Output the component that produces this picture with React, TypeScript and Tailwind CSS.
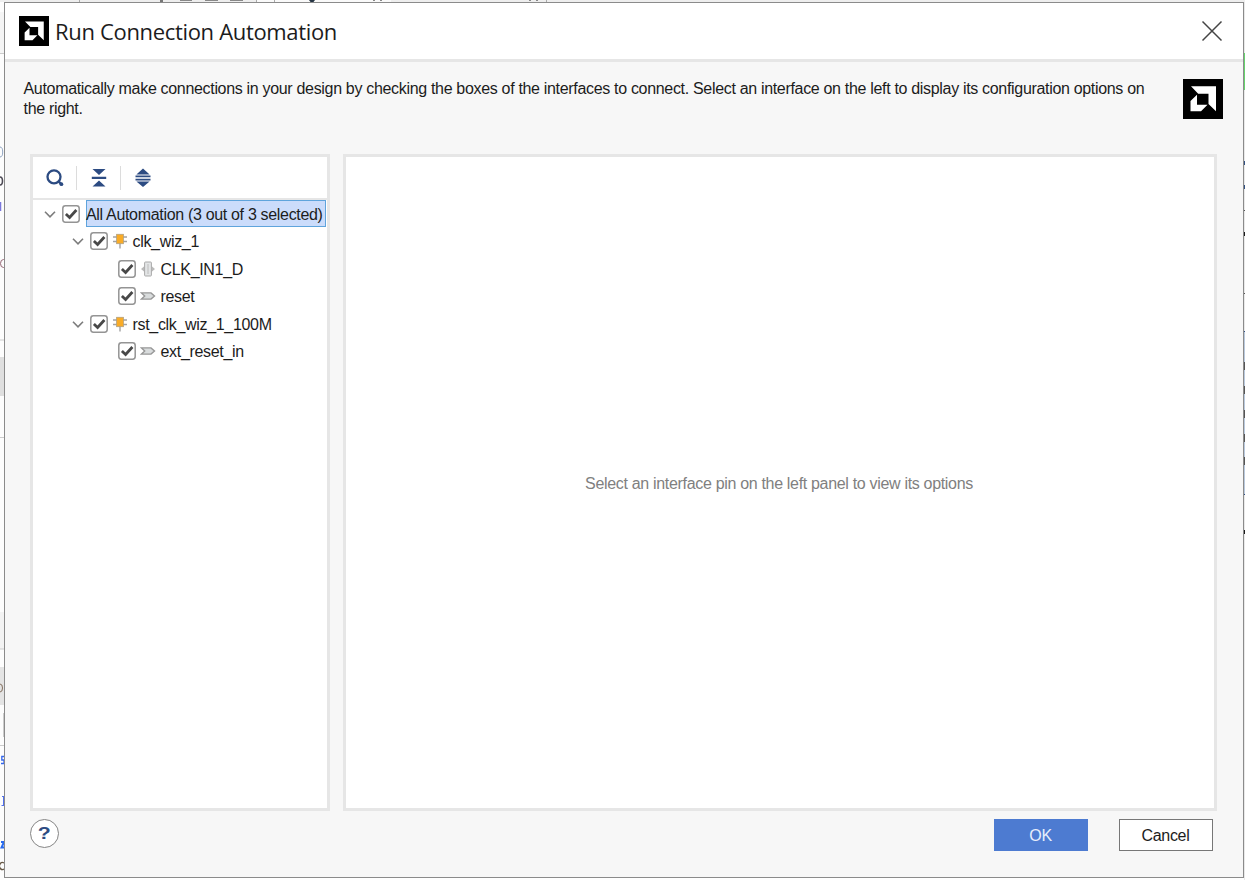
import React from "react";

type IconName = "chip" | "bus" | "port";

type Row = {
  label: string;
  depth: 0 | 1 | 2;
  icon?: IconName;
};

const rows: Row[] = [
  { label: "All Automation (3 out of 3 selected)", depth: 0 },
  { label: "clk_wiz_1", depth: 1, icon: "chip" },
  { label: "CLK_IN1_D", depth: 2, icon: "bus" },
  { label: "reset", depth: 2, icon: "port" },
  { label: "rst_clk_wiz_1_100M", depth: 1, icon: "chip" },
  { label: "ext_reset_in", depth: 2, icon: "port" },
];

const indents = ["pl-2.5", "pl-[37.5px]", "pl-[83.5px]"];

function BrandMark({ className }: { className: string }) {
  return (
    <svg viewBox="0 0 40 40" className={className} aria-hidden="true">
      <rect width="40" height="40" fill="#000" />
      <path d="M8 7.300H33V32.300L25.500 25V14.700H15.200Z" fill="#fff" />
      <path d="M14 15.700V25.800H24.500L18 32.300H7.500V22Z" fill="#fff" />
    </svg>
  );
}

function Chevron() {
  return (
    <svg viewBox="0 0 14 14" className="h-3.5 w-3.5 shrink-0" fill="none" stroke="#7c7c7c" strokeWidth="1.600">
      <path d="M2 4.800L7 9.800L12 4.800" />
    </svg>
  );
}

function Checkbox() {
  return (
    <svg viewBox="0 0 20 20" className="h-5 w-5 shrink-0">
      <rect x="1.800" y="1.800" width="16.400" height="16.400" rx="2.600" fill="#fff" stroke="#949494" strokeWidth="1.500" />
      <path d="M4.900 10L8.600 13.500L15.400 6" fill="none" stroke="#484848" strokeWidth="2.800" />
    </svg>
  );
}

function NodeIcon({ name }: { name: IconName }) {
  if (name === "chip") {
    return (
      <svg viewBox="0 0 16 16" className="h-4 w-4 shrink-0">
        <path d="M1 4H15M1 8.500H15M8 10V15.500" stroke="#a3a3a3" strokeWidth="1.400" />
        <rect x="4.600" y="1.300" width="6.800" height="9.400" fill="#f9ac28" stroke="#b4a17d" strokeWidth="0.800" />
      </svg>
    );
  }
  if (name === "bus") {
    return (
      <svg viewBox="0 0 16 16" className="h-4 w-4 shrink-0">
        <path d="M4.500 5L1 8L4.500 11ZM11.500 5L15 8L11.500 11Z" fill="#bbb" />
        <rect x="4.600" y="1" width="6.800" height="14" rx="0.800" fill="#e3e5e6" stroke="#a9a9a9" />
        <path d="M8 3V13" stroke="#bcbcbc" />
      </svg>
    );
  }
  return (
    <svg viewBox="0 0 16 16" className="h-4 w-4 shrink-0">
      <path d="M1.500 4.900H11L14.500 8L11 11.100H1.500L4.700 8Z" fill="#d9dcdd" stroke="#979797" strokeWidth="1.400" />
    </svg>
  );
}

function TreeRow({ row }: { row: Row }) {
  return (
    <div className={`flex h-[27.5px] items-center ${indents[row.depth]}`}>
      {row.depth < 2 && <Chevron />}
      <span className={row.depth < 2 ? "ml-1 flex" : "flex"}>
        <Checkbox />
      </span>
      {row.icon && (
        <span className="ml-[3px] flex">
          <NodeIcon name={row.icon} />
        </span>
      )}
      {row.depth === 0 ? (
        <span className="mr-px ml-[5px] flex h-[27px] flex-1 items-center border border-[#5fa4dc] bg-[#cbdcfb] pt-0.5 whitespace-nowrap">
          <span className="-ml-px">{row.label}</span>
        </span>
      ) : (
        <span className="ml-[5px] pt-0.5 whitespace-nowrap">{row.label}</span>
      )}
    </div>
  );
}

function Toolbar() {
  return (
    <div className="flex h-[43px] shrink-0 items-center border-b-2 border-[#e6e6e6] pl-3">
      <svg viewBox="0 0 20 20" className="h-5 w-5" fill="none" stroke="#2c4b82">
        <circle cx="9" cy="8.800" r="6.500" strokeWidth="2.300" />
        <path d="M13.500 13.300L15.800 15.600" strokeWidth="2.400" />
        <circle cx="16.400" cy="16.200" r="1.900" fill="#2c4b82" stroke="none" />
      </svg>
      <span className="ml-[11px] h-6 w-px bg-[#dcdcdc]" />
      <svg viewBox="0 0 18 20" className="ml-[13px] h-5 w-[18px]" fill="#2c4b82">
        <path d="M2.500 1H15.500L9 7ZM1.800 8.800H16.200V10.900H1.800ZM9 12.500L15.500 18.500H2.500Z" />
      </svg>
      <span className="ml-3 h-6 w-px bg-[#dcdcdc]" />
      <svg viewBox="0 0 18 20" className="ml-[12.5px] h-5 w-[18px]" fill="#2c4b82">
        <path d="M9 0.600L15.600 6.600H2.400ZM1.500 7.600H16.500V9.300H1.500ZM1.500 10.800H16.500V12.500H1.500ZM2.400 13.500H15.600L9 19Z" />
      </svg>
    </div>
  );
}

/* Slivers of the main window that stay visible around the dialog. */
function TopEdge() {
  return (
    <svg viewBox="0 0 1245 2" className="block h-0.5 w-full shrink-0" aria-hidden="true">
      <rect width="1245" height="2" fill="#eeeeee" />
      <rect x="257" width="134" height="2" fill="#fafafa" />
      <path d="M79.500 0V2M256.500 0V2M274.500 0V2M546.500 0V2" stroke="#aaa" />
      <path d="M180 0.500H192M205 0.500H218M230 0.500H243M373 0.500H375M380 0.500H382M529 0.500H531M536 0.500H538" stroke="#888" />
      <path d="M309 0H315L313.500 2H310.500Z" fill="#263544" />
      <rect x="160" width="3" height="2" fill="#777" />
    </svg>
  );
}

function LeftEdge() {
  return (
    <svg viewBox="0 2 4 878" className="h-[878px] w-1 shrink-0" aria-hidden="true">
      <rect y="2" width="4" height="878" fill="#fdfdfd" />
      <rect y="12" width="4" height="41" fill="#f5f5f5" />
      <rect y="357" width="4" height="39" fill="#dfdfdf" />
      <rect y="612" width="4" height="37" fill="#f3f3f3" />
      <rect y="667" width="4" height="38" fill="#e4e4e4" />
      <path d="M0 53.500H4M0 340H4M0 437.500H4M0 649H4M0 745.500H4M3.500 713V737" stroke="#ccc" />
      <g fill="none">
        <ellipse cx="0" cy="152" rx="2.700" ry="5" stroke="#8fa3c0" />
        <ellipse cx="0" cy="181" rx="2.500" ry="4" stroke="#4d4a55" strokeWidth="1.600" />
        <path d="M0 202V211" stroke="#7b78dd" strokeWidth="2.500" />
        <ellipse cx="3.500" cy="263.500" rx="3" ry="4" stroke="#956674" />
        <ellipse cx="0" cy="688" rx="2.500" ry="4" stroke="#84705f" />
        <path d="M4 756.500H1.800V760H4V763.500H1" stroke="#3567ed" strokeWidth="1.300" />
        <path d="M2 796.500H4M3.500 796V806M1.500 805.500H4" stroke="#5271ed" />
        <path d="M1 842H4L1.500 847.500H4" stroke="#286bf0" strokeWidth="2" />
        <path d="M4 863A3 3.500 0 1 0 4 869" stroke="#665744" strokeWidth="1.400" />
      </g>
    </svg>
  );
}

function RightEdge() {
  return (
    <svg viewBox="0 2 1 878" className="h-[878px] w-px shrink-0" aria-hidden="true">
      <rect y="2" width="1" height="878" fill="#e9e9e9" />
      <rect y="53" width="1" height="37" fill="#65d56c" />
      <rect y="331" width="1" height="164" fill="#b9c9de" />
      <path d="M0 161H1V165H0ZM0 185H1V189H0ZM0 331H1V332H0ZM0 494H1V495H0Z" fill="#315082" />
      <path d="M0 210H1V211H0ZM0 293H1V294H0ZM0 362H1V370H0ZM0 386H1V394H0ZM0 410H1V418H0ZM0 434H1V442H0ZM0 457H1V465H0Z" fill="#555" />
      <path d="M0 232H1V236H0ZM0 530H1V534H0Z" fill="#1a1a1a" />
    </svg>
  );
}

function Dialog() {
  return (
    <section className="flex h-[876px] w-[1240px] shrink-0 flex-col border border-[#8b8b8b] bg-[#f7f7f7]">
      <header className="flex h-[59px] shrink-0 items-center border-b-3 border-[#e6e6e6] bg-white pr-5 pl-3.5">
        <BrandMark className="h-[30px] w-[30px]" />
        <h1 className="ml-1.5 font-['Open_Sans',sans-serif] text-[22px] leading-7 tracking-[-0.33px] whitespace-nowrap">
          Run Connection Automation
        </h1>
        <button className="ml-auto flex" aria-label="Close">
          <svg viewBox="0 0 22 22" className="h-[22px] w-[22px]" stroke="#444" strokeWidth="1.500">
            <path d="M1.500 1.500L20.500 20.500M20.500 1.500L1.500 20.500" />
          </svg>
        </button>
      </header>
      <div className="flex h-[92px] shrink-0 items-start pt-[17px] pr-[20.5px] pl-[18.5px]">
        <p className="w-[1140px] leading-5">
          Automatically make connections in your design by checking the boxes of the interfaces to connect. Select an interface on the left to display its configuration options on
          <br />
          the right.
        </p>
        <BrandMark className="ml-auto h-10 w-10 shrink-0" />
      </div>
      <main className="flex h-[657px] shrink-0 gap-[13px] pr-[26px] pl-[25px]">
        <aside className="flex w-[300px] shrink-0 flex-col border-[3px] border-[#e6e6e6] bg-white">
          <Toolbar />
          <div>
            {rows.map((row) => (
              <TreeRow key={row.label} row={row} />
            ))}
          </div>
        </aside>
        <div className="flex flex-1 items-center justify-center border-[3px] border-[#e6e6e6] bg-white pt-0.5 pr-0.5 text-[#808080]">
          <span className="whitespace-nowrap">Select an interface pin on the left panel to view its options</span>
        </div>
      </main>
      <footer className="flex flex-1 items-start pt-2 pr-[30.5px] pl-[25px]">
        <button className="flex h-[29px] w-[29px] items-center justify-center rounded-full border-[1.5px] border-[#858585] bg-white text-[#2c4b82]">
          <span className="scale-x-125 text-[17px] font-bold tracking-normal">?</span>
        </button>
        <button className="ml-auto flex h-8 w-[94px] items-center justify-center bg-[#4d7bd1] pt-0.5 text-[#e8eefb]">OK</button>
        <button className="ml-[31px] flex h-8 w-[94px] items-center justify-center border border-[#777] bg-white pt-px">Cancel</button>
      </footer>
    </section>
  );
}

export default function App() {
  return (
    <div className="flex h-[880px] w-[1245px] flex-col overflow-hidden bg-white font-['Liberation_Sans',Arial,sans-serif] text-base tracking-[-0.32px] text-[#1c1c1c]">
      <TopEdge />
      <div className="flex h-[878px]">
        <LeftEdge />
        <Dialog />
        <RightEdge />
      </div>
    </div>
  );
}
